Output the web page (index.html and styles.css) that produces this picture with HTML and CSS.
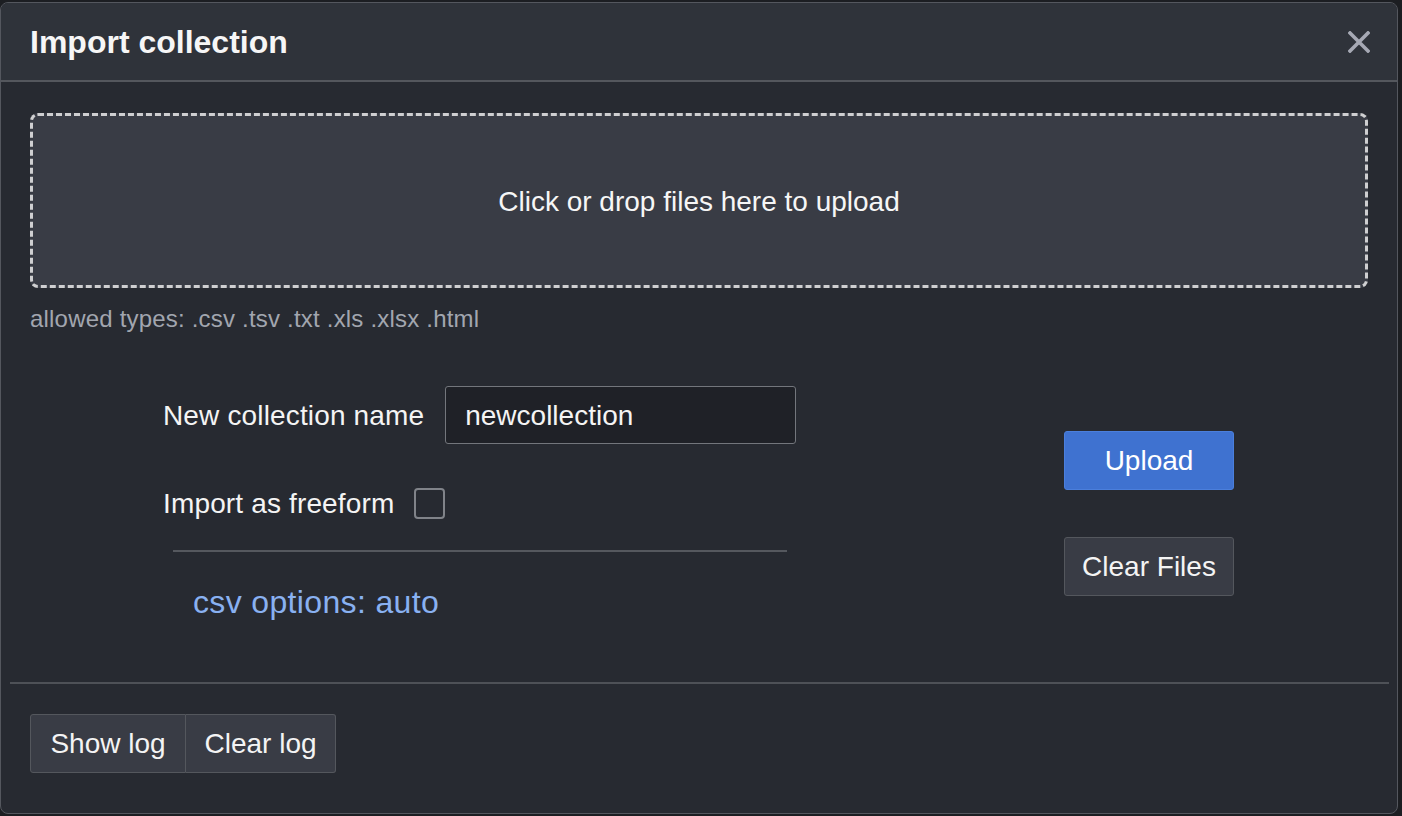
FILE: index.html
```html
<!DOCTYPE html>
<html>
<head>
<meta charset="utf-8">
<link rel="stylesheet" href="styles.css">
</head>
<body>
<div class="dialog">
  <header class="dlg-head">
    <h1 class="title">Import collection</h1>
    <button class="close" aria-label="close">
      <svg width="22" height="22" viewBox="0 0 22 22"><path d="M2 2 L20 20 M20 2 L2 20" stroke="#a6a9b4" stroke-width="3.6" stroke-linecap="square"/></svg>
    </button>
  </header>
  <div class="dlg-body">
    <div class="dropzone">Click or drop files here to upload</div>
    <div class="allowed">allowed types: .csv .tsv .txt .xls .xlsx .html</div>
    <div class="main">
      <div class="form">
        <div class="row row-name">
          <label class="label">New collection name</label>
          <input class="text-input" type="text" value="newcollection">
        </div>
        <div class="row row-check">
          <label class="label">Import as freeform</label>
          <span class="checkbox"></span>
        </div>
        <div class="sep"></div>
        <div class="csv">csv options: auto</div>
      </div>
      <div class="actions">
        <button class="btn btn-primary">Upload</button>
        <button class="btn btn-secondary">Clear Files</button>
      </div>
    </div>
  </div>
  <footer class="dlg-foot">
    <div class="btn-group">
      <button class="btn btn-secondary grp-first">Show log</button>
      <button class="btn btn-secondary grp-last">Clear log</button>
    </div>
  </footer>
</div>
</body>
</html>
```
FILE: styles.css
```css
* { box-sizing: border-box; }
html, body {
  margin: 0;
  padding: 0;
  background: #1c1e22;
  font-family: "Liberation Sans", Arial, Helvetica, sans-serif;
  color: #f2f2f2;
}
.dialog {
  margin-top: 2px;
  width: 1398px;
  height: 812px;
  border: 1px solid #54575e;
  border-radius: 8px;
  background: #272a31;
  overflow: hidden;
  display: flex;
  flex-direction: column;
}
.dlg-head {
  height: 79px;
  background: #2f333a;
  border-bottom: 2px solid #54575d;
  display: flex;
  align-items: center;
  justify-content: space-between;
  padding: 0 27px 0 29px;
  flex: none;
}
.title {
  margin: 0;
  font-size: 32px;
  font-weight: bold;
  color: #f6f6f6;
  line-height: 36px;
}
.close {
  background: none;
  border: 0;
  padding: 0;
  width: 22px;
  height: 22px;
  display: flex;
  cursor: pointer;
}
.dlg-body {
  padding: 31px 29px 0 29px;
}
.dropzone {
  height: 175px;
  border: 3px dashed #cfcfd1;
  border-radius: 8px;
  background: #393c45;
  display: flex;
  align-items: center;
  justify-content: center;
  font-size: 28px;
  color: #f6f6f6;
  padding-top: 2px;
}
.allowed {
  margin-top: 17px;
  font-size: 24px;
  line-height: 28px;
  color: #a2a6af;
  letter-spacing: 0.2px;
}
.main {
  margin-top: 53px;
  display: flex;
  justify-content: space-between;
  align-items: flex-start;
  padding: 0 134px 0 133px;
}
.form {
  width: 634px;
}
.row {
  display: flex;
  align-items: center;
}
.label {
  font-size: 28px;
  line-height: 32px;
  color: #f4f4f4;
  letter-spacing: 0.15px;
  white-space: nowrap;
  padding-top: 2px;
}
.text-input {
  margin-left: 21px;
  width: 351px;
  height: 58px;
  background: #1f2127;
  border: 1px solid #73767c;
  border-radius: 3px;
  color: #f4f4f4;
  font-family: inherit;
  font-size: 28px;
  padding: 2px 19px 0 19px;
  outline: none;
}
.row-check {
  margin-top: 42px;
}
.checkbox {
  margin-left: 20px;
  width: 31px;
  height: 31px;
  border: 2px solid #808389;
  border-radius: 4px;
  background: #272a31;
}
.sep {
  margin: 30px 10px 0 10px;
  height: 2px;
  background: #55585e;
}
.csv {
  margin-top: 32px;
  padding-left: 30px;
  font-size: 32px;
  line-height: 36px;
  color: #89b1f1;
  letter-spacing: 0.35px;
}
.actions {
  margin-top: 45px;
  width: 170px;
  display: flex;
  flex-direction: column;
  gap: 47px;
}
.btn {
  font-family: inherit;
  font-size: 28px;
  height: 59px;
  border-radius: 3px;
  color: #f4f4f4;
  cursor: pointer;
  white-space: nowrap;
  padding-top: 2px;
}
.btn-primary {
  background: #3f72d0;
  border: 1px solid #4b7fdc;
  color: #ffffff;
}
.btn-secondary {
  background: #393c45;
  border: 1px solid #54575d;
}
.dlg-foot {
  margin: 62px 8px 0 9px;
  border-top: 2px solid #4e5157;
  padding: 30px 20px 0 20px;
}
.btn-group {
  display: flex;
}
.btn-group .btn {
  padding-left: 0;
  padding-right: 0;
}
.grp-first {
  width: 156px;
  border-radius: 3px 0 0 3px;
}
.grp-last {
  width: 150px;
  border-left: 0;
  border-radius: 0 3px 3px 0;
}
```
